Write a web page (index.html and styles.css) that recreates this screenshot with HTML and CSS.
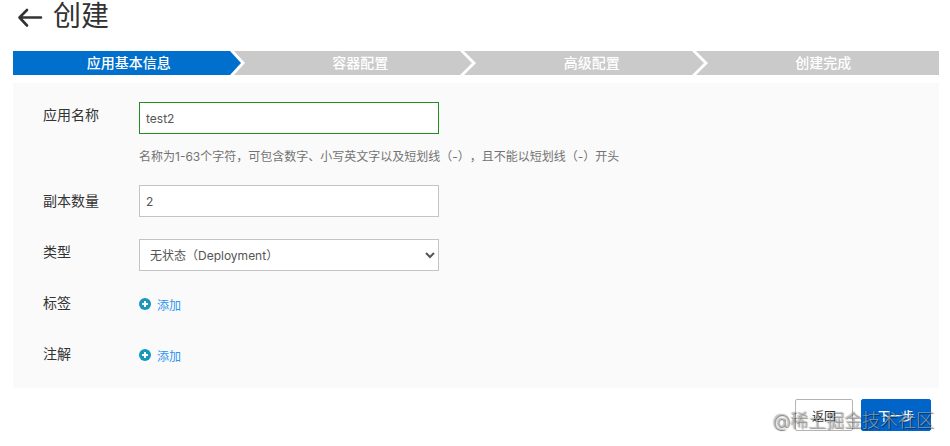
FILE: index.html
```html
<!DOCTYPE html>
<html lang="zh-CN">
<head>
  <meta charset="UTF-8">
  <meta name="viewport" content="width=device-width, initial-scale=1.0">
  <title>创建</title>
  <link rel="stylesheet" href="styles.css">
</head>
<body>
  <header class="page-header">
    <a class="back" href="#" aria-label="返回">
      <svg width="26" height="20" viewBox="0 0 26 20" fill="none" stroke="#333" stroke-width="2.6" stroke-linecap="round" stroke-linejoin="round">
        <path d="M3 9.500H24M10 2L2.500 9.500L10 17.500"/>
      </svg>
    </a>
    <h1>创建</h1>
  </header>

  <!-- Wizard steps -->
  <ol class="steps">
    <li class="step active">应用基本信息
      <svg class="step-arrow" width="16" height="24" viewBox="0 0 16 24">
        <path fill="#cacaca" d="M0 0H16V24H0Z"/>
        <path fill="#fff" d="M0 0H5L16 12L5 24H0Z"/>
        <path fill="#0070cc" d="M0 0H1L12 12L1 24H0Z"/>
      </svg>
    </li>
    <li class="step">容器配置
      <svg class="step-arrow" width="16" height="24" viewBox="0 0 16 24">
        <path fill="#fff" d="M0 0H4L16 12L4 24H0L12 12Z"/>
      </svg>
    </li>
    <li class="step">高级配置
      <svg class="step-arrow" width="16" height="24" viewBox="0 0 16 24">
        <path fill="#fff" d="M0 0H4L16 12L4 24H0L12 12Z"/>
      </svg>
    </li>
    <li class="step">创建完成</li>
  </ol>

  <form class="form">
    <div class="panel">
      <div class="row">
        <label class="label" for="name">应用名称</label>
        <div class="field">
          <input class="control valid" type="text" id="name" value="test2">
          <p class="hint">名称为1-63个字符，可包含数字、小写英文字以及短划线（-），且不能以短划线（-）开头</p>
        </div>
      </div>
      <div class="row row-center">
        <label class="label" for="replicas">副本数量</label>
        <div class="field">
          <input class="control" type="text" id="replicas" value="2">
        </div>
      </div>
      <div class="row">
        <label class="label" for="type">类型</label>
        <div class="field">
          <select class="control" id="type">
            <option>无状态（Deployment）</option>
          </select>
        </div>
      </div>
      <div class="row">
        <span class="label" id="tags">标签</span>
        <div class="field">
          <button class="add" type="button" aria-describedby="tags">
            <svg width="12" height="12" viewBox="0 0 12 12">
              <circle cx="6" cy="6" r="6" fill="#1797be"/>
              <path d="M6 3V9M3 6H9" stroke="#fff" stroke-width="2"/>
            </svg>
            添加
          </button>
        </div>
      </div>
      <div class="row">
        <span class="label" id="notes">注解</span>
        <div class="field">
          <button class="add" type="button" aria-describedby="notes">
            <svg width="12" height="12" viewBox="0 0 12 12">
              <circle cx="6" cy="6" r="6" fill="#1797be"/>
              <path d="M6 3V9M3 6H9" stroke="#fff" stroke-width="2"/>
            </svg>
            添加
          </button>
        </div>
      </div>
    </div>

    <div class="actions">
      <button class="btn" type="button">返回</button>
      <button class="btn primary" type="button">下一步</button>
    </div>
  </form>

  <div class="watermark">@稀土掘金技术社区</div>
</body>
</html>
```

FILE: styles.css
```css
* {
  box-sizing: border-box;
}

body {
  position: relative;
  margin: 0;
  padding: 0 11px 15px 13px;
  font-family: Inter, "Noto Sans CJK SC", sans-serif;
  font-size: 12px;
  color: #333;
  background: #fff;
}

input,
select,
button {
  font: inherit;
}

.page-header {
  display: flex;
  align-items: center;
  gap: 10px;
  height: 31px;
  margin-bottom: 20px;
  padding-left: 4px;
}

.back {
  display: flex;
  padding-top: 4px;
}

h1 {
  margin: 0;
  font-size: 28px;
  font-weight: 400;
  line-height: 28px;
}

/* Wizard steps */
.steps {
  display: flex;
  margin: 0 0 8px;
  padding: 0;
  list-style: none;
}

.step {
  position: relative;
  flex: 1;
  height: 24px;
  line-height: 24px;
  font-size: 14px;
  font-weight: 500;
  text-align: center;
  color: #fff;
  background: #cacaca;
}

.step.active {
  background: #0070cc;
}

.step-arrow {
  position: absolute;
  top: 0;
  right: 0;
}

/* Form */
.panel {
  display: flex;
  flex-direction: column;
  gap: 19px;
  padding: 19px 30px 15px;
  background: #fafafa;
}

.row {
  display: flex;
  align-items: flex-start;
  min-height: 32px;
}

.row-center {
  align-items: center;
  margin-bottom: 3px;
}

.label {
  width: 96px;
  flex-shrink: 0;
  font-size: 14px;
  line-height: 26px;
}

.field {
  flex: 1;
}

.control {
  display: block;
  width: 100%;
  max-width: 300px;
  height: 32px;
  padding: 0 6px;
  border: 1px solid #c4c4c4;
  border-radius: 0;
  color: #555;
  background: #fff;
}

.control.valid {
  border-color: #1e8e1e;
}

.hint {
  margin: 14px 0 0;
  line-height: 18px;
  color: #737373;
  text-spacing-trim: space-all;
}

.add {
  display: flex;
  align-items: center;
  gap: 6px;
  height: 28px;
  padding: 0;
  border: none;
  color: #2b95f0;
  background: none;
  cursor: pointer;
}

/* Footer buttons */
.actions {
  display: flex;
  justify-content: flex-end;
  gap: 8px;
  padding: 11px 8px 0 0;
}

.btn {
  height: 32px;
  padding: 0 16px;
  border: 1px solid #b4b4b4;
  border-radius: 2px;
  color: #333;
  background: #fff;
  cursor: pointer;
}

.btn.primary {
  border-color: #0064c8;
  font-weight: 500;
  color: #fff;
  background: #0064c8;
}

.watermark {
  position: absolute;
  right: 16px;
  bottom: 12px;
  font-size: 18px;
  font-weight: 300;
  line-height: 26px;
  color: rgba(255, 255, 255, 0.5);
  text-shadow: 1px 1px 1px rgba(0, 0, 0, 0.5), 0 0 1px rgba(0, 0, 0, 0.5);
  pointer-events: none;
}
```
